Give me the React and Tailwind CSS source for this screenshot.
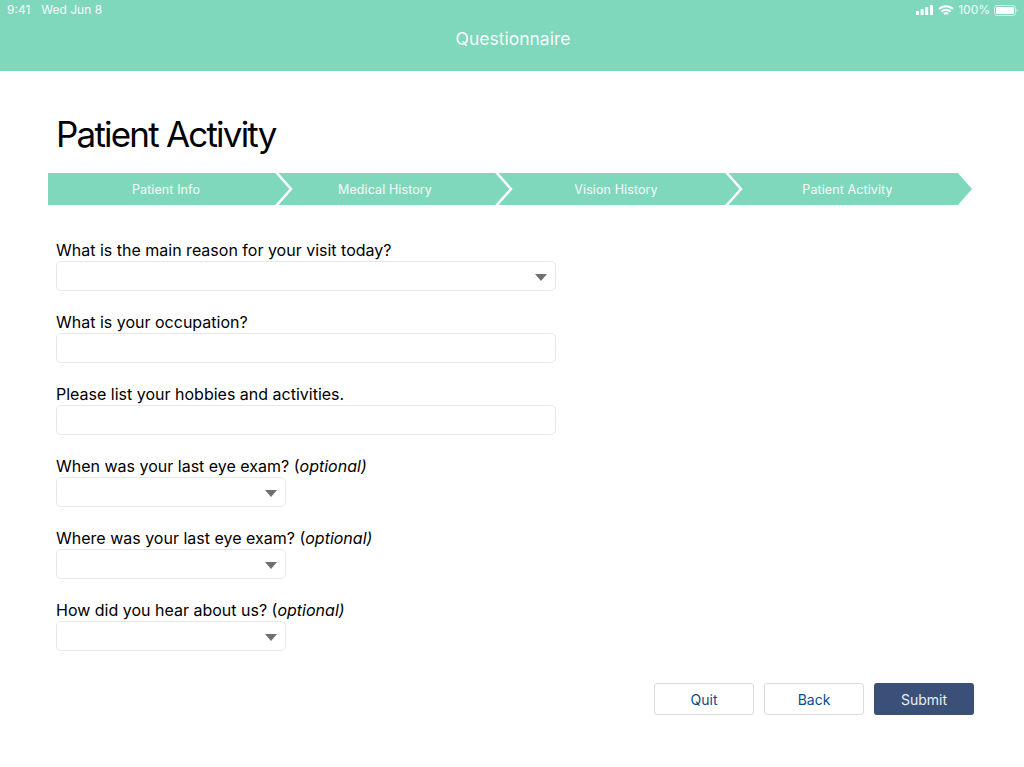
import React from "react";

const font = "font-['Inter','Liberation_Sans',sans-serif]";

const steps = [
  { label: "Patient Info", box: "w-[229px] pl-[7px]" },
  { label: "Medical History", box: "w-[220px] pr-[4px]" },
  { label: "Vision History", box: "w-[230px] pl-[8px]" },
  {
    label: "Patient Activity",
    box: "w-[245px] pr-[4px] [clip-path:polygon(0_0,231px_0,100%_50%,231px_100%,0_100%)]",
  },
];

const Arrow = () => (
  <svg width="12" height="7" viewBox="0 0 12 7" className="mt-[3px] fill-[#6f6f6f]">
    <path d="M0 0h12L6 7z" />
  </svg>
);

const StatusBar = () => (
  <div className="flex justify-between items-center h-[20px] pl-[7px] pr-[6px] text-[12px] text-white/90">
    <div className="flex gap-[11px]">
      <span>9:41</span>
      <span>Wed Jun 8</span>
    </div>
    <div className="flex items-center">
      <svg width="17" height="10" viewBox="0 0 17 10" className="fill-white">
        <rect x="0" y="6" width="3" height="4" rx="0.5" />
        <rect x="4.6" y="4" width="3" height="6" rx="0.5" />
        <rect x="9.2" y="2" width="3" height="8" rx="0.5" />
        <rect x="14" y="0" width="3" height="10" rx="0.5" />
      </svg>
      <svg width="16" height="11" viewBox="0 0 16 11" className="ml-[5px] stroke-white fill-none" strokeWidth="2">
        <path d="M1 4a10 10 0 0 1 14 0" />
        <path d="M3.5 6.6a6.4 6.4 0 0 1 9 0" />
        <path d="M6 9a3 3 0 0 1 4 0" />
      </svg>
      <span className="ml-[4px]">100%</span>
      <svg width="24" height="11" viewBox="0 0 24 11" className="ml-[4px]">
        <rect x="0.5" y="0.5" width="21" height="10" rx="2.5" className="fill-none stroke-white/60" />
        <rect x="2" y="2" width="18" height="7" rx="1.3" className="fill-white" />
        <path d="M22.6 3.8c.8.3 1.2 1 1.2 1.7s-.4 1.4-1.2 1.7z" className="fill-white/60" />
      </svg>
    </div>
  </div>
);

const Stepper = () => (
  <div className="flex h-8 w-[924px] -ml-2 text-[12.5px] text-white/90 tracking-[0.1px]">
    {steps.map((step, i) => (
      <div key={step.label} className={`${step.box} relative flex items-center justify-center pt-[2px] bg-[#80d8bc]`}>
        {step.label}
        {i < 3 && (
          <svg
            width="20"
            height="32"
            viewBox="0 0 20 32"
            className="absolute top-0 -right-[18px] z-10 fill-none stroke-white"
            strokeWidth="2.5"
          >
            <path d="M1 -1L16 16L1 33" />
          </svg>
        )}
      </div>
    ))}
  </div>
);

const Select = ({ small }) => (
  <div
    className={`${
      small ? "w-[230px]" : "w-[500px]"
    } h-[30px] flex items-center justify-end pr-[8px] rounded-[5px] border border-[#e8e8e8] bg-white`}
  >
    <Arrow />
  </div>
);

const TextInput = () => (
  <input type="text" className="block w-[500px] h-[30px] rounded-[5px] border border-[#e8e8e8] bg-white" />
);

const Field = ({ label, optional, children }) => (
  <div className="h-[72px]">
    <label className="block h-[24px] pt-[1px] leading-[24px] text-[16px] text-black">
      {label}
      {optional && (
        <>
          {" ("}
          <em>optional)</em>
        </>
      )}
    </label>
    {children}
  </div>
);

export default function App() {
  return (
    <div className={`${font} min-h-[767px] bg-white`}>
      <div className="h-[71px] bg-[#80d8bc]">
        <StatusBar />
        <div className="mt-[6px] text-center text-[17.5px] leading-[26px] text-white/95 translate-x-[1px]">
          Questionnaire
        </div>
      </div>

      <div className="pl-[56px]">
        <h1 className="pt-[41px] pb-[17px] text-[35px] leading-[44px] tracking-[-1.8px] text-black">
          Patient Activity
        </h1>
        <Stepper />

        <div className="mt-[32px]">
          <Field label="What is the main reason for your visit today?">
            <Select />
          </Field>
          <Field label="What is your occupation?">
            <TextInput />
          </Field>
          <Field label="Please list your hobbies and activities.">
            <TextInput />
          </Field>
          <Field label="When was your last eye exam?" optional>
            <Select small />
          </Field>
          <Field label="Where was your last eye exam?" optional>
            <Select small />
          </Field>
          <Field label="How did you hear about us?" optional>
            <Select small />
          </Field>
        </div>

        <div className="flex justify-end gap-[10px] w-[918px] mt-[14px] text-[14px]">
          <button className="w-[100px] h-8 rounded-[3px] border border-[#dcdcdc] bg-white text-[#0b4a8c]">Quit</button>
          <button className="w-[100px] h-8 rounded-[3px] border border-[#dcdcdc] bg-white text-[#0b4a8c]">Back</button>
          <button className="w-[100px] h-8 rounded-[3px] bg-[#3a5078] text-white/90">Submit</button>
        </div>
      </div>
    </div>
  );
}
